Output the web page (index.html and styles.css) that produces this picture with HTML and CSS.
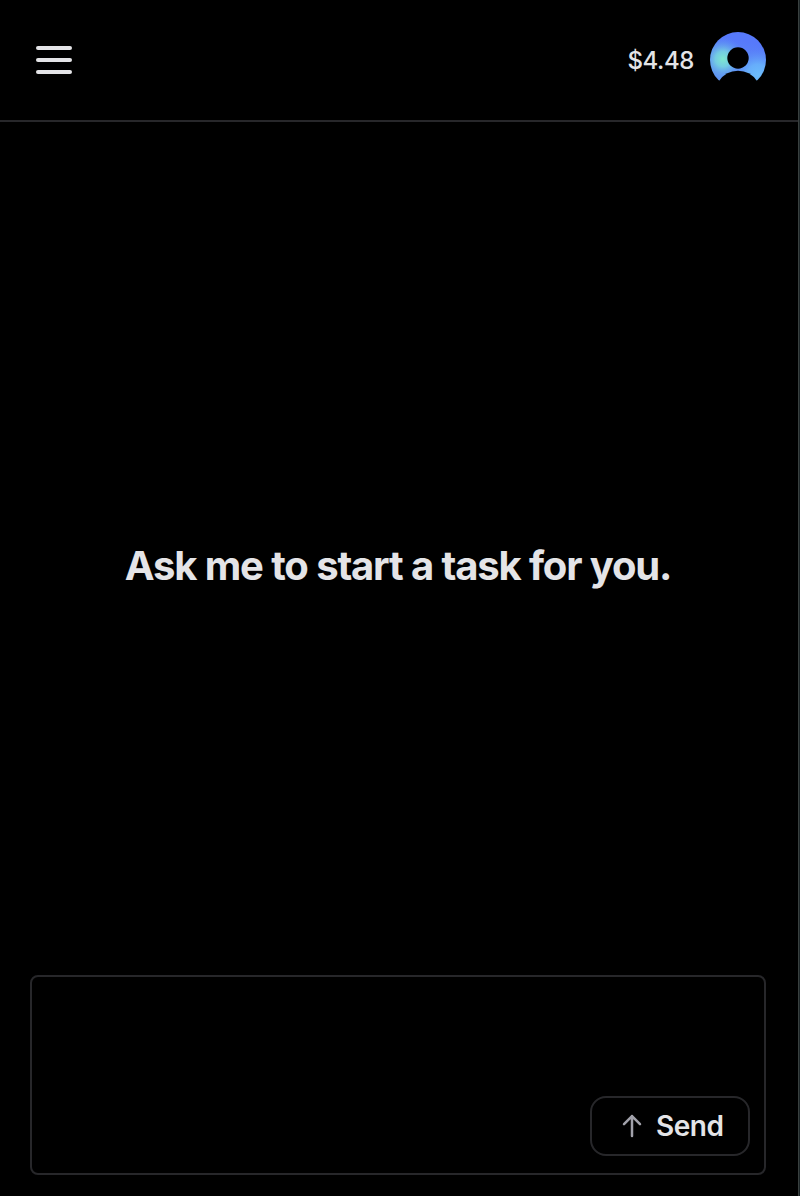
FILE: index.html
```html
<!DOCTYPE html>
<html lang="en">
<head>
<meta charset="utf-8">
<title>Tasks</title>
<link rel="stylesheet" href="styles.css">
</head>
<body>
<div class="app">
  <header class="topbar">
    <button class="menu" aria-label="Menu"><span class="bar"></span><span class="bar"></span><span class="bar"></span></button>
    <div class="account">
      <span class="balance">$4.48</span>
      <svg class="avatar" viewBox="0 0 56 56" aria-hidden="true">
        <defs>
          <radialGradient id="mint" gradientUnits="userSpaceOnUse" cx="13" cy="27" r="22">
            <stop offset="0" stop-color="#7ee8cf"/>
            <stop offset=".35" stop-color="#78d8df" stop-opacity=".85"/>
            <stop offset="1" stop-color="#5c8cf8" stop-opacity="0"/>
          </radialGradient>
          <radialGradient id="sky" gradientUnits="userSpaceOnUse" cx="48" cy="43" r="27">
            <stop offset="0" stop-color="#6cbdfc"/>
            <stop offset=".4" stop-color="#69b4fb" stop-opacity=".85"/>
            <stop offset="1" stop-color="#5c8cf8" stop-opacity="0"/>
          </radialGradient>
          <linearGradient id="base" x1=".6" y1="0" x2=".4" y2="1">
            <stop offset=".15" stop-color="#5779fa"/>
            <stop offset="1" stop-color="#6099f2"/>
          </linearGradient>
          <mask id="person">
            <circle cx="28" cy="28" r="28" fill="#fff"/>
            <circle cx="28" cy="26" r="10.7" fill="#000"/>
            <path d="M9 49Q16 38.700 28 38.700T47 49V57H9Z" fill="#000"/>
          </mask>
        </defs>
        <g mask="url(#person)">
          <rect width="56" height="56" fill="url(#base)"/>
          <rect width="56" height="56" fill="url(#mint)"/>
          <rect width="56" height="56" fill="url(#sky)"/>
        </g>
      </svg>
    </div>
  </header>
  <main class="welcome"><h1 class="prompt">Ask me to start a task for you.</h1></main>
  <form class="composer">
    <button class="send" type="button">
      <svg class="arrow" viewBox="0 0 20 24" aria-hidden="true"><path d="M10 22V2M2 10.200L10 2.200L18 10.200"/></svg>
      <span class="label">Send</span>
    </button>
  </form>
</div>
</body>
</html>
```
FILE: styles.css
```css
* { box-sizing: border-box; }
body { margin: 0; background: #000; color: #e4e4e7; font-family: Inter, sans-serif; }
button { background: none; color: inherit; font-family: inherit; padding: 0; border: 0; }
.app { display: flex; flex-direction: column; height: 1196px; padding-right: 2px; background: linear-gradient(90deg, #39403f 50%, #1d2628 50%) right / 2px 100% no-repeat; }
.topbar { display: flex; align-items: center; justify-content: space-between; height: 122px; padding: 0 32px 0 36px; border-bottom: 2px solid #27272a; flex: none; }
.menu { display: flex; flex-direction: column; gap: 8px; }
.bar { width: 36px; height: 4px; border-radius: 2px; background: #e4e4e7; }
.account { display: flex; align-items: center; gap: 16px; }
.balance { font-size: 24px; font-weight: 500; line-height: 32px; letter-spacing: -0.4px; padding-top: 2px; }
.avatar { width: 56px; height: 56px; display: block; }
.welcome { flex: 1; display: flex; align-items: center; justify-content: center; padding: 34px 2px 0 0; }
.prompt { margin: 0; font-size: 40px; font-weight: 650; line-height: 48px; letter-spacing: -1.18px; word-spacing: 0.2px; white-space: nowrap; }
.composer { display: flex; align-items: flex-end; justify-content: flex-end; height: 200px; margin: 0 32px 21px 30px; padding: 0 14px 17px; border: 2px solid #27272a; border-radius: 8px; flex: none; }
.send { display: flex; align-items: center; gap: 14px; width: 160px; height: 60px; padding-left: 30px; border: 2px solid #27272a; border-radius: 16px; font-size: 28px; font-weight: 580; line-height: 40px; letter-spacing: -0.5px; }
.arrow { width: 20px; height: 24px; fill: none; stroke: #a1a1aa; stroke-width: 2.5; stroke-linecap: round; stroke-linejoin: round; }
```
